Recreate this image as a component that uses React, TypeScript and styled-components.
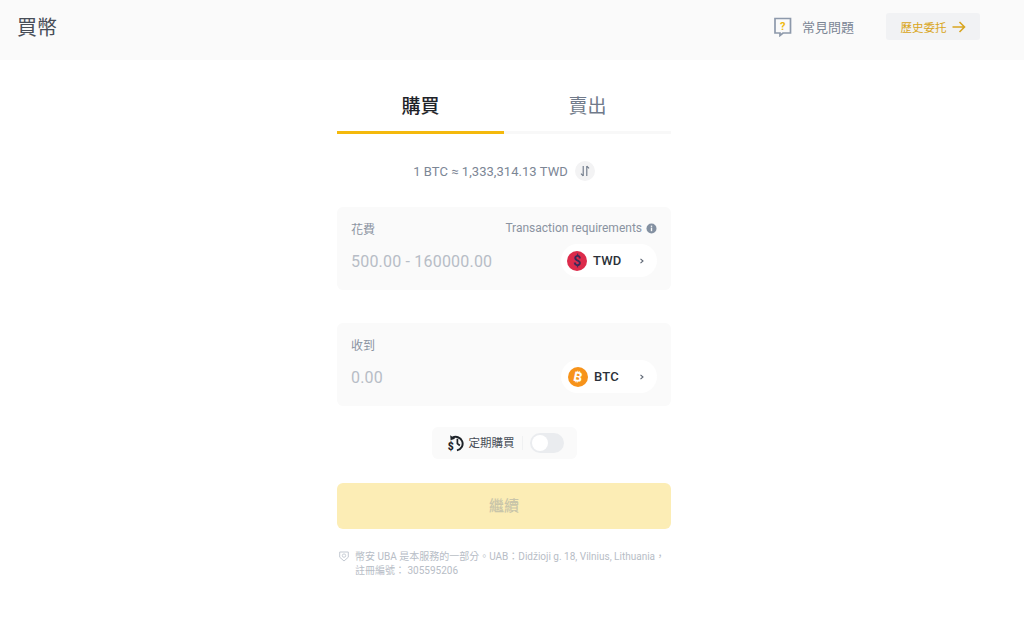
import React from 'react';
import styled, {createGlobalStyle} from 'styled-components';

const FONT = `Roboto, "Noto Sans CJK TC", sans-serif`;

const GlobalStyle = createGlobalStyle`
  html, body {
    margin: 0;
    padding: 0;
    background: #fff;
    font-family: ${FONT};
  }
`;

const FaqIcon = () => (
    <svg width="18" height="20" viewBox="0 0 18 20">
        <path d="M1 1.5h15.5v14.5h-7.5l-3 2.5v-2.5h-5z" fill="none" stroke="#8d99ab" strokeWidth="1.7" />
        <text x="8.8" y="12.5" fontSize="11" fontWeight="700" fill="#f0b90b" textAnchor="middle" fontFamily="Roboto, sans-serif">?</text>
    </svg>
);

const ArrowIcon = () => (
    <svg width="14" height="12" viewBox="0 0 14 12">
        <path d="M0.5 6h12M7.5 1l5 5-5 5" fill="none" stroke="#d9a520" strokeWidth="1.6" />
    </svg>
);

const SwapIcon = () => (
    <svg width="10" height="12" viewBox="0 0 10 12">
        <path d="M3.2 1v10M3.2 11L1 8.6M6.8 11V1M6.8 1L9 3.4" fill="none" stroke="#6b7685" strokeWidth="1.1" />
    </svg>
);

const InfoIcon = () => (
    <svg width="11" height="11" viewBox="0 0 11 11">
        <circle cx="5.5" cy="5.5" r="5" fill="#8390a1" />
        <rect x="4.8" y="4.6" width="1.4" height="3.6" fill="#fafafa" />
        <rect x="4.8" y="2.6" width="1.4" height="1.3" fill="#fafafa" />
    </svg>
);

const TwdIcon = () => (
    <svg width="20" height="20" viewBox="0 0 20 20">
        <circle cx="10" cy="10" r="10" fill="#dc2b4b" />
        <text x="10" y="15" fontSize="14" fontWeight="700" fill="#3a2a5c" textAnchor="middle" fontFamily="Roboto, sans-serif">$</text>
    </svg>
);

const BtcIcon = () => (
    <svg width="20" height="20" viewBox="0 0 20 20">
        <circle cx="10" cy="10" r="10" fill="#f7931a" />
        <text x="10" y="14.5" fontSize="13" fontWeight="700" fill="#fff" textAnchor="middle" fontFamily="Inter, sans-serif" transform="rotate(12 10 10)">₿</text>
    </svg>
);

const ChevronIcon = () => (
    <svg width="6" height="6" viewBox="0 0 6 6">
        <path d="M1.5 0.8L4 3 1.5 5.2" fill="none" stroke="#5e6673" strokeWidth="1.1" />
    </svg>
);

const RecurringIcon = () => (
    <svg width="18" height="18" viewBox="0 0 18 18">
        <path d="M5.5 3.6A7.2 7.2 0 1 1 10.5 16.8" fill="none" stroke="#1e2329" strokeWidth="2.1" />
        <path d="M3.4 0.8l.4 5.4 4.8-1.6z" fill="#1e2329" />
        <path d="M11 4.6v5l2.6 2" fill="none" stroke="#1e2329" strokeWidth="1.8" />
        <text x="4" y="16.4" fontSize="11" fontWeight="900" fill="#1e2329" textAnchor="middle" fontFamily="Roboto, sans-serif">$</text>
    </svg>
);

const ShieldIcon = () => (
    <svg width="10" height="11" viewBox="0 0 10 11">
        <path d="M0.7 1h8.6v5.2L5 10 0.7 6.2z" fill="none" stroke="#c3c9d2" strokeWidth="1" />
        <circle cx="5" cy="4.6" r="1.7" fill="none" stroke="#c3c9d2" strokeWidth="0.9" />
    </svg>
);

const Page = styled.div`
    width: 1024px;
    height: 630px;
    overflow: hidden;
`;

const TopBar = styled.header`
    height: 60px;
    box-sizing: border-box;
    padding: 0 44px 7px 17px;
    background: #fafafa;
    display: flex;
    align-items: center;
    justify-content: space-between;
`;

const PageTitle = styled.h1`
    margin: 0;
    font-size: 20px;
    font-weight: 400;
    color: #474d57;
`;

const TopActions = styled.div`
    display: flex;
    align-items: center;
`;

const FaqLink = styled.a`
    display: flex;
    align-items: center;
    gap: 10px;
    margin-right: 32px;
    font-size: 13px;
    color: #7c8695;
`;

const HistoryButton = styled.button`
    width: 94px;
    height: 27px;
    border: 0;
    border-radius: 3px;
    background: #f1f2f4;
    color: #d9a520;
    font-family: ${FONT};
    font-size: 11.5px;
    display: flex;
    align-items: center;
    justify-content: center;
    gap: 5px;
    padding: 0;
`;

const Form = styled.main`
    width: 334px;
    margin-left: 337px;
    display: flex;
    flex-direction: column;
`;

const Tabs = styled.div`
    display: flex;
    margin-top: 20px;
`;

const Tab = styled.div<{$active?: boolean}>`
    flex: 1;
    height: 54px;
    box-sizing: border-box;
    display: flex;
    align-items: center;
    justify-content: center;
    padding-bottom: 2px;
    font-size: 19px;
    font-weight: ${p => p.$active ? 500 : 400};
    color: ${p => p.$active ? '#1e2329' : '#707a8a'};
    border-bottom: 3px solid ${p => p.$active ? '#f4b90c' : '#f8f8f8'};
`;

const RateRow = styled.div`
    margin-top: 26px;
    height: 22px;
    display: flex;
    align-items: center;
    justify-content: center;
    gap: 7px;
    font-size: 13px;
    letter-spacing: 0.05px;
    color: #7c8695;
`;

const SwapButton = styled.span`
    width: 20px;
    height: 20px;
    border-radius: 50%;
    background: #f3f3f4;
    display: flex;
    align-items: center;
    justify-content: center;
`;

const Card = styled.section<{$marginTop: number}>`
    margin-top: ${p => p.$marginTop}px;
    height: 83px;
    box-sizing: border-box;
    padding: 13px 14px 0;
    border-radius: 6px;
    background: #fafafa;
`;

const CardHead = styled.div`
    height: 16px;
    display: flex;
    align-items: center;
    justify-content: space-between;
    font-size: 12px;
    color: #8a93a1;
`;

const Requirements = styled.span`
    display: flex;
    align-items: center;
    gap: 4px;
`;

const CardBody = styled.div`
    margin-top: 8px;
    display: flex;
    align-items: center;
    justify-content: space-between;
`;

const Amount = styled.span`
    padding-top: 2px;
    font-size: 16px;
    letter-spacing: 0.2px;
    color: #b7bdc6;
`;

const CurrencyPill = styled.div<{$inset: number}>`
    width: 96px;
    height: 33px;
    box-sizing: border-box;
    padding: 0 12px 0 ${p => p.$inset}px;
    border-radius: 17px;
    background: #fff;
    display: flex;
    align-items: center;
    font-size: 13px;
    font-weight: 500;
    letter-spacing: 0.2px;
    color: #2b3139;

    svg:last-child {
        margin-left: auto;
    }
`;

const CurrencyCode = styled.span`
    margin-left: 6px;
`;

const RecurringBox = styled.div`
    align-self: center;
    margin-top: 21px;
    width: 145px;
    height: 32px;
    box-sizing: border-box;
    padding: 0 13px 0 15px;
    border-radius: 6px;
    background: #fafafa;
    display: flex;
    align-items: center;
    font-size: 11.5px;
    line-height: 14px;
    white-space: nowrap;
    color: #474d57;
`;

const RecurringLabel = styled.span`
    margin-left: 5px;
    padding-right: 7px;
    border-right: 1px solid #f0f1f2;
`;

const Toggle = styled.span`
    margin-left: 7px;
    width: 34px;
    height: 20px;
    flex: none;
    box-sizing: border-box;
    padding: 2px;
    border-radius: 10px;
    background: #eaecef;
    display: flex;
`;

const ToggleKnob = styled.span`
    width: 16px;
    height: 16px;
    border-radius: 50%;
    background: #fff;
`;

const ContinueButton = styled.button`
    margin-top: 24px;
    height: 46px;
    border: 0;
    border-radius: 6px;
    background: #fcedb5;
    color: #c9c5a9;
    font-family: ${FONT};
    font-size: 15px;
    font-weight: 500;
    padding: 0 0 3px;
`;

const Notice = styled.div`
    margin-top: 21px;
    display: flex;
    gap: 6px;
    padding-left: 2px;
    font-size: 10px;
    line-height: 14px;
    color: #b7bdc6;
    white-space: nowrap;

    svg {
        flex: none;
        margin-top: 1px;
    }
`;

export default function App() {
    return (
        <Page>
            <GlobalStyle />
            <TopBar>
                <PageTitle>買幣</PageTitle>
                <TopActions>
                    <FaqLink><FaqIcon />常見問題</FaqLink>
                    <HistoryButton>歷史委托<ArrowIcon /></HistoryButton>
                </TopActions>
            </TopBar>
            <Form>
                <Tabs>
                    <Tab $active>購買</Tab>
                    <Tab>賣出</Tab>
                </Tabs>
                <RateRow>
                    1 BTC ≈ 1,333,314.13 TWD
                    <SwapButton><SwapIcon /></SwapButton>
                </RateRow>
                <Card $marginTop={25}>
                    <CardHead>
                        <span>花費</span>
                        <Requirements>Transaction requirements <InfoIcon /></Requirements>
                    </CardHead>
                    <CardBody>
                        <Amount>500.00 - 160000.00</Amount>
                        <CurrencyPill $inset={6}>
                            <TwdIcon />
                            <CurrencyCode>TWD</CurrencyCode>
                            <ChevronIcon />
                        </CurrencyPill>
                    </CardBody>
                </Card>
                <Card $marginTop={33}>
                    <CardHead><span>收到</span></CardHead>
                    <CardBody>
                        <Amount>0.00</Amount>
                        <CurrencyPill $inset={7}>
                            <BtcIcon />
                            <CurrencyCode>BTC</CurrencyCode>
                            <ChevronIcon />
                        </CurrencyPill>
                    </CardBody>
                </Card>
                <RecurringBox>
                    <RecurringIcon />
                    <RecurringLabel>定期購買</RecurringLabel>
                    <Toggle><ToggleKnob /></Toggle>
                </RecurringBox>
                <ContinueButton>繼續</ContinueButton>
                <Notice>
                    <ShieldIcon />
                    <span>幣安 UBA 是本服務的一部分。UAB：Didžioji g. 18, Vilnius, Lithuania，<br />註冊編號： 305595206</span>
                </Notice>
            </Form>
        </Page>
    );
}
